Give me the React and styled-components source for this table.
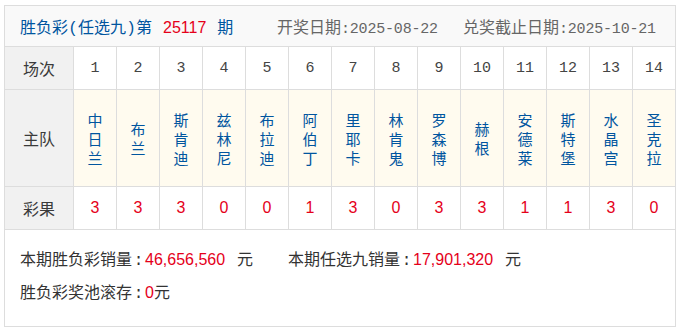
import React from "react";
import styled, { createGlobalStyle } from "styled-components";

const GlobalStyle = createGlobalStyle`
  html, body { margin: 0; padding: 0; background: #fff; }
  body {
    font-family: "Noto Sans CJK SC", "Liberation Sans", sans-serif;
    color: #333;
  }
`;

const CJK = `"Noto Sans CJK SC", sans-serif`;
const MONO = `"Liberation Mono", "Noto Sans CJK SC", monospace`;
const ARIAL = `"Liberation Sans", Arial, sans-serif`;

const Wrap = styled.div`
  box-sizing: border-box;
  width: 672px;
  margin: 5px 0 0 4px;
  border: 1px solid #ddd;
`;

const Header = styled.div`
  height: 40px;
  background: #f9f9f9;
  border-bottom: 1px solid #ddd;
  display: grid;
  grid-template-columns: 257px 186px auto;
  align-items: center;
  padding-left: 15px;
  font-size: 16px;
`;

const Title = styled.div`
  color: #00559f;
  font-family: ${MONO};
  font-size: 16px;
  white-space: nowrap;
`;

const Paren = styled.span`
  display: inline-block;
  width: 10px;
  text-align: center;
`;

const Red = styled.span`
  color: #e5001a;
  font-family: ${ARIAL};
  margin: 0 ${(p) => p.$right || 0}px 0 ${(p) => p.$left || 0}px;
`;

const DateInfo = styled.div`
  color: #666;
  font-family: ${MONO};
  font-size: 15px;
  white-space: nowrap;
  letter-spacing: -0.2px;
`;

const Label = styled.span`
  font-family: ${CJK};
  font-size: 16px;
  letter-spacing: 0;
`;

const Grid = styled.div`
  display: grid;
  grid-template-columns: 68px repeat(14, 42px);
  grid-template-rows: 42px 96px 42px;
  gap: 1px;
  background: #ddd;
  border-bottom: 1px solid #ddd;
`;

const Cell = styled.div`
  background: ${(p) => (p.$head ? "#f1f1f1" : p.$team ? "#fffbef" : "#fff")};
  display: flex;
  align-items: center;
  justify-content: center;
  font-size: 16px;
  color: #3a3a3a;
  font-family: ${CJK};
`;

const Num = styled.span`
  font-family: ${MONO};
  font-size: 15px;
  color: #444;
`;

const Result = styled.span`
  font-family: ${ARIAL};
  font-size: 16px;
  color: #e5001a;
`;

const Team = styled.span`
  display: block;
  width: 1em;
  font-size: 15px;
  line-height: 19px;
  color: #00559f;
  text-align: center;
  font-family: ${CJK};
`;

const Footer = styled.div`
  padding: 14px 0 16px 15px;
  font-size: 16px;
  line-height: 32px;
  font-family: ${MONO};
  color: #333;
`;

const FooterRow = styled.div`
  display: grid;
  grid-template-columns: ${(p) => (p.$two ? "268px auto" : "auto")};
  white-space: nowrap;
`;

const Colon = styled.span`
  display: inline-block;
  width: 13px;
  text-align: center;
`;

const teams = ["中日兰", "布兰", "斯肯迪", "兹林尼", "布拉迪", "阿伯丁", "里耶卡", "林肯鬼", "罗森博", "赫根", "安德莱", "斯特堡", "水晶宫", "圣克拉"];
const results = [3, 3, 3, 0, 0, 1, 3, 0, 3, 3, 1, 1, 3, 0];

export default function App() {
  return (
    <>
      <GlobalStyle />
      <Wrap>
        <Header>
          <Title>
            胜负彩<Paren>(</Paren>任选九<Paren>)</Paren>第<Red $left={11} $right={11}>25117</Red>期
          </Title>
          <DateInfo>
            <Label>开奖日期</Label>:2025-08-22
          </DateInfo>
          <DateInfo>
            <Label>兑奖截止日期</Label>:2025-10-21
          </DateInfo>
        </Header>
        <Grid>
          <Cell $head>场次</Cell>
          {teams.map((_, i) => (
            <Cell key={"n" + i}>
              <Num>{i + 1}</Num>
            </Cell>
          ))}
          <Cell $head>主队</Cell>
          {teams.map((t, i) => (
            <Cell key={"t" + i} $team>
              <Team>{t}</Team>
            </Cell>
          ))}
          <Cell $head>彩果</Cell>
          {results.map((r, i) => (
            <Cell key={"r" + i}>
              <Result>{r}</Result>
            </Cell>
          ))}
        </Grid>
        <Footer>
          <FooterRow $two>
            <span>
              本期胜负彩销量<Colon>:</Colon><Red $right={12}>46,656,560</Red>元
            </span>
            <span>
              本期任选九销量<Colon>:</Colon><Red $right={12}>17,901,320</Red>元
            </span>
          </FooterRow>
          <FooterRow>
            <span>
              胜负彩奖池滚存<Colon>:</Colon><Red>0</Red>元
            </span>
          </FooterRow>
        </Footer>
      </Wrap>
    </>
  );
}
